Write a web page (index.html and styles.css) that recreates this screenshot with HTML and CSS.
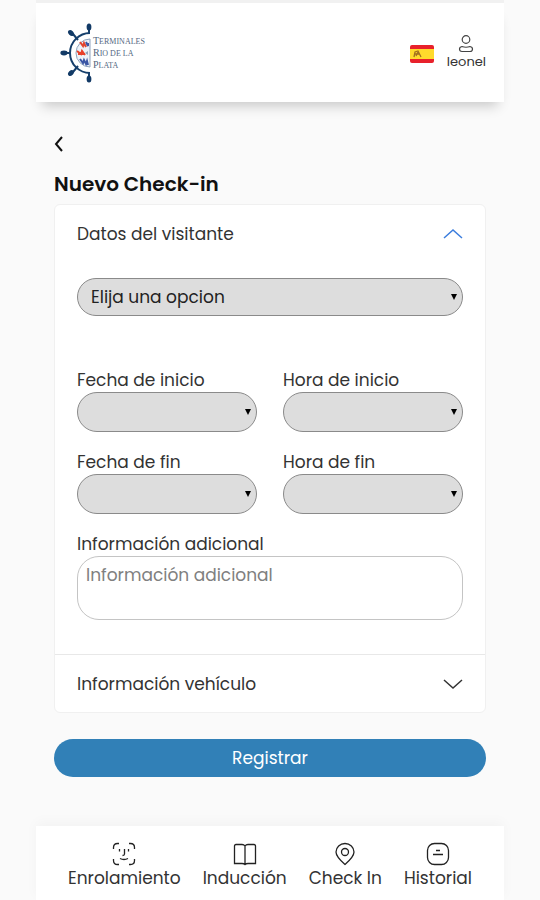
FILE: index.html
```html
<!DOCTYPE html>
<html lang="es">

<head>
    <meta charset="UTF-8">
    <meta name="viewport" content="width=device-width, initial-scale=1">
    <title>Nuevo Check-in</title>
    <link rel="stylesheet" href="styles.css">
</head>

<body>
    <div class="app">
        <header class="header">
            <a href="#" class="logo">
                <svg class="logo-wheel" viewBox="0 0 32 60" width="32" height="60" aria-hidden="true">
                    <path d="M30 10a20 20 0 0 0 0 40" fill="none" stroke="#163f6b" stroke-width="2" />
                    <path d="M30 16a14 14 0 0 0 0 28z" fill="#edf2f8" stroke="#8fa3bd" stroke-width="1" />
                    <path d="M29 4v7M13 11l5 6M3 30h7M13 49l5-6M29 49v7" stroke="#163f6b" stroke-width="2" />
                    <g fill="#123a66">
                        <ellipse cx="29" cy="4" rx="2.4" ry="3.6" />
                        <ellipse cx="11" cy="10" rx="2.4" ry="3.4" transform="rotate(-45 11 10)" />
                        <ellipse cx="4" cy="30" rx="3.6" ry="2.4" />
                        <ellipse cx="11" cy="50" rx="2.4" ry="3.4" transform="rotate(45 11 50)" />
                        <ellipse cx="29" cy="56" rx="2.4" ry="3.6" />
                    </g>
                    <path d="M20 19l3 4 1-3 2 4" fill="none" stroke="#e2452f" stroke-width="2" />
                    <path d="M26 19l2 4v-3M20 36l3 4 1-3 2 4 1-3 1 4" fill="none" stroke="#3a55a4" stroke-width="2" />
                    <path d="M17 28l4 3 1-3 3 4M18 31h7" fill="none" stroke="#e8402a" stroke-width="2" />
                    <path d="M25 30l3-2v4z" fill="#8fa3bd" />
                </svg>
                <span class="logo-text">
                    <span>Terminales</span>
                    <span>Rio de la</span>
                    <span>Plata</span>
                </span>
            </a>
            <div class="header-user">
                <button type="button" class="flag" aria-label="Español">
                    <svg viewBox="0 0 24 18" width="24" height="18" aria-hidden="true">
                        <rect width="24" height="18" rx="2" fill="#e8212b" />
                        <rect y="4" width="24" height="10" fill="#ffda2c" />
                        <path d="M4 12l1-5 3-1 3 6M5 9h4M6 11l2-4" fill="none" stroke="#a2701f" stroke-width="1.3" />
                    </svg>
                </button>
                <a href="#" class="user">
                    <svg viewBox="0 0 16 18" width="16" height="18" fill="none" stroke="#444" stroke-width="1.2" aria-hidden="true">
                        <circle cx="8" cy="4.500" r="3.800" />
                        <path d="M4 11.500Q8 13 12 11.500Q14.500 12 14.500 14Q14.500 16.500 12 16.500H4Q1.500 16.500 1.500 14Q1.500 12 4 11.500z" />
                    </svg>
                    leonel
                </a>
            </div>
        </header>

        <main class="main">
            <a href="#" class="back" aria-label="Volver">
                <svg viewBox="0 0 10 16" width="10" height="16" fill="none" stroke="#111" stroke-width="2" aria-hidden="true">
                    <path d="M8 1L2 8l6 7" />
                </svg>
            </a>
            <h1>Nuevo Check-in</h1>

            <form>
                <div class="accordion">
                    <details open>
                        <summary>
                            Datos del visitante
                            <svg class="chevron" viewBox="0 0 20 12" width="20" height="12" aria-hidden="true">
                                <path d="M1 2l9 8 9-8" />
                            </svg>
                        </summary>
                        <div class="accordion-body">
                            <div class="select select-main">
                                <select name="visitante" aria-label="Visitante">
                                    <option>Elija una opcion</option>
                                </select>
                            </div>
                            <div class="grid">
                                <div class="field">
                                    <label for="fecha-inicio">Fecha de inicio</label>
                                    <div class="select">
                                        <select id="fecha-inicio" name="fechaInicio"><option></option></select>
                                    </div>
                                </div>
                                <div class="field">
                                    <label for="hora-inicio">Hora de inicio</label>
                                    <div class="select">
                                        <select id="hora-inicio" name="horaInicio"><option></option></select>
                                    </div>
                                </div>
                                <div class="field">
                                    <label for="fecha-fin">Fecha de fin</label>
                                    <div class="select">
                                        <select id="fecha-fin" name="fechaFin"><option></option></select>
                                    </div>
                                </div>
                                <div class="field">
                                    <label for="hora-fin">Hora de fin</label>
                                    <div class="select">
                                        <select id="hora-fin" name="horaFin"><option></option></select>
                                    </div>
                                </div>
                            </div>
                            <div class="field">
                                <label for="info">Información adicional</label>
                                <textarea id="info" name="info" placeholder="Información adicional"></textarea>
                            </div>
                        </div>
                    </details>
                    <details>
                        <summary>
                            Información vehículo
                            <svg class="chevron" viewBox="0 0 20 12" width="20" height="12" aria-hidden="true">
                                <path d="M1 2l9 8 9-8" />
                            </svg>
                        </summary>
                    </details>
                </div>

                <button type="submit" class="btn">Registrar</button>
            </form>
        </main>

        <nav class="nav">
            <a href="#">
                <svg viewBox="0 0 24 24" width="24" height="24" aria-hidden="true">
                    <path d="M1.500 7V5.500Q1.500 1.500 5.500 1.500H7M17 1.500h1.500Q22.500 1.500 22.500 5.500V7M22.500 17v1.500Q22.500 22.500 18.500 22.500H17M7 22.500H5.500Q1.500 22.500 1.500 18.500V17M7.500 7v2.500M16.500 7v2.500M12.500 7v5q0 1.500-2 1.500M8 16.500q4 2 8 0" />
                </svg>
                Enrolamiento
            </a>
            <a href="#">
                <svg viewBox="0 0 24 24" width="24" height="24" aria-hidden="true">
                    <path d="M12 4Q11 2.500 9 2.500H3Q1.500 2.500 1.500 4V21.500H9Q11 21.500 12 22.500Q13 21.500 15 21.500H22.500V4Q22.500 2.500 21 2.500H15Q13 2.500 12 4zM12 4V22" />
                </svg>
                Inducción
            </a>
            <a href="#">
                <svg viewBox="0 0 24 24" width="24" height="24" aria-hidden="true">
                    <path d="M12 22.500C8 19 3 14.500 3 10a9 8.500 0 0 1 18 0c0 4.500-5 9-9 12.500z" />
                    <circle cx="12" cy="10" r="3.500" />
                </svg>
                Check In
            </a>
            <a href="#">
                <svg viewBox="0 0 24 24" width="24" height="24" aria-hidden="true">
                    <rect x="1.500" y="1.500" width="21" height="21" rx="7" />
                    <path d="M10 8.500h4M7 12.500h10" />
                </svg>
                Historial
            </a>
        </nav>
    </div>
</body>

</html>
```
FILE: styles.css
```css
* {
    box-sizing: border-box;
}

body {
    font-family: 'Poppins', 'Inter', sans-serif;
    font-size: 17px;
    font-weight: 400;
    line-height: 24px;
    background-color: #fafafa;
    color: #333;
    margin: 0;
}

a {
    color: inherit;
    text-decoration: none;
}

svg {
    display: block;
}

.app {
    min-height: 100vh;
    margin: 0 36px;
    border-top: 3px solid #f1f1f1;
    display: flex;
    flex-direction: column;
}

.header {
    display: flex;
    justify-content: space-between;
    align-items: center;
    height: 99px;
    padding: 0 18px 0 24px;
    background-color: #fff;
    box-shadow: 0 10px 12px -6px rgba(0, 0, 0, 0.2);
}

.logo {
    display: flex;
    align-items: center;
    gap: 1px;
}

.logo-text {
    font-family: 'Liberation Serif', serif;
    font-size: 8px;
    line-height: 11px;
    color: #54677f;
    text-transform: uppercase;
}

.logo-text span {
    display: block;
}

.logo-text span::first-letter {
    font-size: 10px;
}

.header-user {
    display: flex;
    align-items: center;
    gap: 13px;
}

.flag {
    padding: 2px 0 0;
    border: none;
    background: none;
}

.user {
    display: flex;
    flex-direction: column;
    align-items: center;
    font-size: 13px;
    line-height: 18px;
}

.main {
    flex: 1;
    padding: 34px 18px;
}

.back {
    display: inline-block;
    vertical-align: top;
}

h1 {
    margin: 12px 0 8px;
    font-size: 20px;
    font-weight: 600;
    line-height: 24px;
    color: #111;
}

.accordion {
    background-color: #fff;
    border: 1px solid #f0f0f0;
    border-radius: 6px;
}

details + details {
    border-top: 1px solid #e8e8e8;
}

summary {
    display: flex;
    justify-content: space-between;
    align-items: center;
    height: 57px;
    padding: 0 22px;
    list-style: none;
    cursor: pointer;
}

.chevron {
    fill: none;
    stroke: #333;
    stroke-width: 1.5;
}

details[open] .chevron {
    transform: rotate(180deg);
    stroke: #3b7ddd;
}

.accordion-body {
    padding: 16px 22px 34px;
}

.grid {
    display: grid;
    grid-template-columns: 1fr 1fr;
    gap: 18px 26px;
    margin: 52px 0 18px;
}

label {
    display: block;
}

.select {
    position: relative;
}

.select::after {
    content: "";
    position: absolute;
    right: 6px;
    top: 50%;
    margin-top: -3px;
    border: solid transparent;
    border-width: 6px 3px 0;
    border-top-color: #000;
    pointer-events: none;
}

select {
    appearance: none;
    display: block;
    width: 100%;
    height: 40px;
    padding: 0 13px;
    font: inherit;
    color: #222;
    background-color: #ddd;
    border: 1px solid #8a8a8a;
    border-radius: 20px;
}

.select-main select {
    height: 38px;
}

textarea {
    display: block;
    width: 100%;
    height: 64px;
    padding: 6px 8px;
    font: inherit;
    border: 1px solid #c4c4c4;
    border-radius: 22px;
    resize: none;
}

textarea::placeholder {
    color: #808080;
}

.btn {
    display: block;
    width: 100%;
    height: 38px;
    margin-top: 26px;
    font: inherit;
    color: #fff;
    background-color: #3180b7;
    border: none;
    border-radius: 19px;
    cursor: pointer;
}

.nav {
    display: flex;
    justify-content: center;
    gap: 22px;
    padding: 16px 0 10px;
    background-color: #fff;
    box-shadow: 0 -4px 12px rgba(0, 0, 0, 0.03);
}

.nav a {
    display: flex;
    flex-direction: column;
    align-items: center;
}

.nav svg {
    fill: none;
    stroke: #222;
    stroke-width: 1.3;
}
```
